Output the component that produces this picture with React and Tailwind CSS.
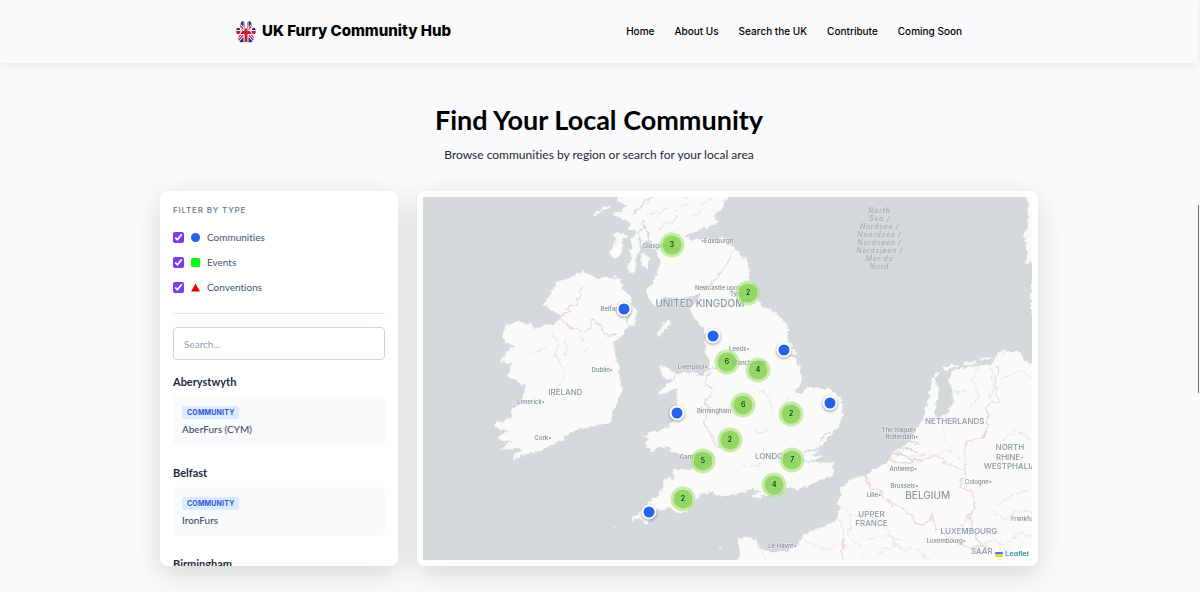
import React, { useState } from "react";

const navLinks = ["Home", "About Us", "Search the UK", "Contribute", "Coming Soon"];

const regions = [
  { name: "Aberystwyth", items: ["AberFurs (CYM)"] },
  { name: "Belfast", items: ["IronFurs"] },
  { name: "Birmingham", items: ["BrumFurs"] },
];

// map units: the visible window is MAP wide and high from its x / y origin
const MAP = { x: 424, y: 197, w: 607, h: 363 };

const clusters = [
  { x: 672, y: 245, count: 3 },
  { x: 748, y: 293, count: 2 },
  { x: 727, y: 362, count: 6 },
  { x: 758, y: 370, count: 4 },
  { x: 743, y: 405, count: 6 },
  { x: 791, y: 414, count: 2 },
  { x: 730, y: 440, count: 2 },
  { x: 703, y: 461, count: 5 },
  { x: 792, y: 460, count: 7 },
  { x: 774, y: 485, count: 4 },
  { x: 683, y: 499, count: 2 },
];

const pins = [
  { x: 624, y: 309 },
  { x: 713, y: 336 },
  { x: 784, y: 350 },
  { x: 830, y: 403 },
  { x: 677, y: 413 },
  { x: 649, y: 512 },
];

const cities = [
  { x: 643, y: 248, text: "Glasgow" },
  { x: 701, y: 243, text: "•Edinburgh" },
  { x: 695, y: 290, text: "Newcastle upon" },
  { x: 730, y: 296, text: "Tyne" },
  { x: 601, y: 311, text: "Belfast" },
  { x: 592, y: 372, text: "Dublin•" },
  { x: 729, y: 351, text: "Leeds•" },
  { x: 678, y: 369, text: "Liverpool•" },
  { x: 732, y: 365, text: "Manchester" },
  { x: 697, y: 413, text: "Birmingham" },
  { x: 518, y: 404, text: "Limerick•" },
  { x: 535, y: 440, text: "Cork•" },
  { x: 680, y: 459, text: "Cardiff" },
  { x: 881, y: 432, text: "The Hague•" },
  { x: 885, y: 439, text: "Rotterdam•" },
  { x: 889, y: 471, text: "Antwerp•" },
  { x: 890, y: 488, text: "Brussels•" },
  { x: 866, y: 497, text: "Lille•" },
  { x: 964, y: 484, text: "Cologne•" },
  { x: 1010, y: 521, text: "Frankfurt" },
  { x: 926, y: 543, text: "Luxembourg•" },
  { x: 768, y: 548, text: "Le Havre•" },
];

const countries = [
  { x: 700, y: 307, text: "UNITED KINGDOM", size: 10 },
  { x: 566, y: 395, text: "IRELAND", size: 8 },
  { x: 772, y: 459, text: "LONDON", size: 8 },
  { x: 954, y: 424, text: "NETHERLANDS", size: 8 },
  { x: 927, y: 499, text: "BELGIUM", size: 10 },
  { x: 968, y: 534, text: "LUXEMBOURG", size: 8 },
  { x: 871, y: 517, text: "UPPER", size: 8 },
  { x: 871, y: 526, text: "FRANCE", size: 8 },
  { x: 1009, y: 450, text: "NORTH", size: 8 },
  { x: 1009, y: 460, text: "RHINE-", size: 8 },
  { x: 1009, y: 469, text: "WESTPHALIA", size: 8 },
  { x: 992, y: 554, text: "SAARLAND", size: 8 },
];

const seaLines = ["North", "Sea /", "Nordsee /", "Noordzee /", "Nordsøen /", "Nordsjøen /", "Mer du", "Nord"];

const Logo = () => (
  <svg viewBox="0 0 40 44" className="h-[22px] w-5" aria-hidden="true">
    <clipPath id="paw">
      <ellipse cx="4.500" cy="20" rx="4" ry="6.500" />
      <ellipse cx="13.500" cy="9" rx="4.500" ry="8.500" />
      <ellipse cx="26.500" cy="9" rx="4.500" ry="8.500" />
      <ellipse cx="35.500" cy="20" rx="4" ry="6.500" />
      <path d="M20 15c7 0 9 9 13 14 5 7 1 14-5 14-3 0-5-1-8-1s-5 1-8 1c-6 0-10-7-5-14 4-5 6-14 13-14z" />
    </clipPath>
    <g clipPath="url(#paw)">
      <path fill="#1d2f7b" d="M0 0h40v44H0z" />
      <path stroke="#fff" strokeWidth="6" d="M0 0l40 44M40 0L0 44" />
      <path stroke="#cf1832" strokeWidth="2.500" d="M0 0l40 44M40 0L0 44" />
      <path stroke="#fff" strokeWidth="10" d="M20 0v44M0 23h40" />
      <path stroke="#cf1832" strokeWidth="6" d="M20 0v44M0 23h40" />
    </g>
  </svg>
);

const BaseMap = () => (
  <svg
    viewBox={`${MAP.x} ${MAP.y} ${MAP.w} ${MAP.h}`}
    preserveAspectRatio="none"
    className="block h-full w-full font-['Inter',sans-serif]"
    role="img"
    aria-label="Map of the British Isles"
  >
    <filter id="coast" filterUnits="userSpaceOnUse" x="420" y="190" width="620" height="375">
      <feTurbulence type="fractalNoise" baseFrequency="0.16" numOctaves="3" seed="4" />
      <feDisplacementMap in="SourceGraphic" scale="7" xChannelSelector="R" yChannelSelector="G" />
    </filter>
    <rect x="424" y="197" width="607" height="363" fill="#d4dadc" />
    <g filter="url(#coast)">
      <g fill="#fafaf8">
        {/* Great Britain */}
        <path d="M626 190L617 200L628 205L623 211L614 213L620 218L632 223L627 230L637 230L631 243L632 257L628 270L630 274L635 273L636 258L640 248L647 240L655 248L661 260L658 273L652 283L647 288L647 295L655 307L663 298L673 297L680 301L693 295L702 292L695 302L690 311L698 323L706 335L705 347L707 357L710 368L702 376L690 372L678 374L670 383L658 393L662 395L677 389L678 402L680 417L673 423L660 430L643 435L648 440L645 445L652 450L665 447L677 452L687 456L700 459L716 452L707 467L690 470L673 469L674 477L665 480L662 492L650 502L643 512L632 516L633 521L640 517L646 524L652 517L657 510L670 508L680 513L688 513L690 503L700 495L713 492L723 497L732 495L743 493L753 488L762 495L773 495L787 488L802 489L815 482L832 475L834 462L810 461L822 457L812 455L818 450L828 438L840 422L843 408L840 397L827 388L807 388L802 394L795 392L803 381L800 365L793 357L782 353L798 355L789 342L786 333L790 331L783 320L777 313L762 307L757 297L750 280L748 263L743 257L732 246L728 238L717 239L697 240L685 236L697 230L717 223L718 220L712 215L722 210L725 200L732 190Z" />
        {/* Ireland */}
        <path d="M583 271L595 277L610 277L620 278L623 287L629 295L632 302L638 313L635 323L627 327L622 336L613 342L615 357L620 367L620 380L622 387L617 403L612 417L612 423L597 425L577 430L557 443L543 450L512 459L523 448L500 450L513 442L497 439L508 431L495 427L498 422L513 418L511 412L522 403L526 387L514 380L506 375L513 363L502 362L507 353L514 347L506 343L503 337L505 325L513 323L532 323L533 328L548 325L557 323L561 315L543 305L552 293L557 282L572 277Z" />
        {/* Continent */}
        <path d="M738 570V537L757 538L758 547L767 551L787 552L798 545L803 535L830 523L838 517L839 500L840 487L850 479L865 475L890 460L892 452L907 443L917 430L925 410L930 387L932 378L937 384L938 398L934 412L938 418L945 414L954 401L951 389L947 381L952 372L970 365L990 367L993 357L1007 352L1020 352L1027 365L1040 360V570Z" />
        <path d="M1026 190L1028 215L1024 235L1027 258L1023 263L1033 262L1040 300V190Z" />
        <path d="M1030 275l3 25v25l-3-15z" />
        {/* smaller islands */}
        <path d="M657 334l3-7 6-6 4-1-1 6-5 7-6 4z" />
        <path d="M660 367l9 1 8 5-4 5-7 1-4-5z" />
        <path d="M609 251l5-3 3-10 7-6 3 4-6 8 1 8-5 7-5-2z" />
        <path d="M641 254l5-2 3 8-2 7-5-1z" />
        <path d="M594 214l8-5 7-5 2 2-7 5-8 6z" />
        <path d="M613 235l5-3 3 2-5 5z" />
        <path d="M751 495l7-2 5 3-6 3z" />
        <path d="M931 377l7-6 2 2-7 7zM942 368l8-3 8-1v2l-14 4zM963 363l13-2v2l-12 2zM981 359l10-2v2l-9 2zM995 354l10-4v2l-9 4z" />
        <path d="M718 548l4-2-1 4zM613 526l2-1v2z" />
      </g>
      {/* sea inlets */}
      <g fill="none" stroke="#d4dadc" strokeWidth="1.6">
        <path d="M640 248l-1-14 6-13M650 244l-3-13-4-7M632 216l10-11 8-7M893 452l14 5 8 4M896 446l12 3 10 4M907 441l12 2" />
        <path d="M710 368l9-1M818 449l-14 3M820 439l8-7M834 462l-32-1M627 325l3-13-4-8" />
      </g>
      {/* rivers and relief */}
      <g fill="none" stroke="#e3e7e7" strokeWidth="1">
        <path d="M645 205l10-8M655 217l14-10M648 214l12-3M667 224l12-7M676 210l14-6M690 216l12-5M700 206l12-7M668 232l10-4M684 198l9-5M659 231l8-9" />
        <path d="M552 332l6 12-2 12 10 14-3 12-7 6M580 332l3 8M588 345l-2 10M533 355l12-8M566 338l1 20" />
        <path d="M757 545l10 15M803 540l24 10 13-5M839 505l12 11 20-1 14 9 10 22 22 3 14 14M851 516l-3 20 12 12 2 14M867 540l17-6 17 7M947 450l-12 5-25 1M940 419l5 22M977 366l-6 15 8 14-10 12M950 394l15-4M990 368l3 17-4 13M1003 380l15-10 12 6M1000 442l15-12 15 9M996 505l16-10 18-5M992 510l14 9 12-10 14 4M975 550l13-10 15 5 14-11 15 2M960 460l-12-10M880 552l16-8 12 9" />
        <path d="M760 390l10 8 2 14M715 407l9 2 8-4M788 396l-5 12M742 465l14 1 12-8 22 2M750 425l8 8 12-2" />
      </g>
      {/* borders */}
      <g fill="none" stroke="#ead6d9" strokeWidth="1.3">
        <path d="M583 286L580 297L575 305L566 308L571 311L560 317L569 326L580 332L588 331L593 319L600 325L604 335L618 336" />
        <path d="M702 291L713 281L722 271L729 259L734 248" />
        <path d="M709 372L704 384L714 390L710 396L705 400L708 410L704 424L714 440L719 448" />
        <path d="M865 475L870 488L881 493L889 503L901 508L914 519L915 525L926 523L931 516L933 525L940 532L953 540L966 548L981 546L1000 552L1006 547" />
        <path d="M890 461L903 464L921 460L935 456L943 462L957 468L965 474L958 488L972 493L974 505L968 516L972 532L981 546" />
        <path d="M997 366L995 385L997 402L986 406L987 427L981 439L966 441L964 460L965 474" />
        <path d="M968 516L961 526L966 535M838 520l6 14-3 26" />
      </g>
    </g>

    <g className="fill-[#7f8c99] text-[6px] font-medium" stroke="#fafaf8" strokeWidth="1" strokeOpacity="0.6" paintOrder="stroke">
      {cities.map((c) => (
        <text key={c.text} x={c.x} y={c.y}>{c.text}</text>
      ))}
    </g>
    <g className="fill-[#8c9aa6] font-medium" textAnchor="middle" stroke="#fafaf8" strokeWidth="1" strokeOpacity="0.6" paintOrder="stroke">
      {countries.map((c) => (
        <text key={c.text} x={c.x} y={c.y} fontSize={c.size}>{c.text}</text>
      ))}
    </g>
    <g className="fill-[#a5afb6] text-[7px] font-medium italic tracking-widest" textAnchor="middle">
      {seaLines.map((line, i) => (
        <text key={line} x="879" y={213 + i * 8}>{line}</text>
      ))}
    </g>
  </svg>
);

const place = (p) => ({
  left: `${((p.x - MAP.x) / MAP.w) * 100}%`,
  top: `${((p.y - MAP.y) / MAP.h) * 100}%`,
});

const Header = () => (
  <header className="relative bg-slate-50 shadow-[0_2px_10px_rgba(0,0,0,0.08)]">
    <div className="mx-auto flex h-[63px] max-w-[726px] items-center justify-between font-['Inter',sans-serif] text-black">
      <a href="#home" className="flex items-center gap-1.5 text-[15px] font-extrabold">
        <Logo />
        UK Furry Community Hub
      </a>
      <nav className="flex gap-5 text-[10px] font-medium">
        {navLinks.map((link) => (
          <a key={link} href="#" className="hover:text-violet-600">{link}</a>
        ))}
      </nav>
    </div>
  </header>
);

const FilterRow = ({ label, checked, onChange, children }) => (
  <label className="flex h-[25px] items-center gap-[7px] text-[10px] text-slate-600">
    <input type="checkbox" checked={checked} onChange={onChange} className="m-0 size-[11px] accent-[#7c3aed]" />
    <svg viewBox="0 0 9 9" className="size-[9px]" aria-hidden="true">{children}</svg>
    {label}
  </label>
);

const Sidebar = () => {
  const [shown, setShown] = useState({ communities: true, events: true, conventions: true });
  const [query, setQuery] = useState("");
  const toggle = (key) => setShown({ ...shown, [key]: !shown[key] });
  const list = regions.filter((r) => r.name.toLowerCase().includes(query.toLowerCase()));

  return (
    <aside className="h-[375px] overflow-y-auto rounded-lg bg-white px-[13px] pt-[11px] shadow-[0_8px_28px_rgba(0,0,0,0.14)] [scrollbar-width:none]">
      <h2 className="mb-[7px] font-['Inter',sans-serif] text-[8px] leading-4 font-medium tracking-widest text-slate-500 uppercase">
        Filter by type
      </h2>
      <div className="mb-[13px] border-b border-slate-200 pb-[13px]">
        <FilterRow label="Communities" checked={shown.communities} onChange={() => toggle("communities")}>
          <circle cx="4.5" cy="4.5" r="4.5" fill="#2563eb" />
        </FilterRow>
        <FilterRow label="Events" checked={shown.events} onChange={() => toggle("events")}>
          <rect width="9" height="9" rx="1.5" fill="#0f1" />
        </FilterRow>
        <FilterRow label="Conventions" checked={shown.conventions} onChange={() => toggle("conventions")}>
          <path d="M4.5 0.500L9 8.500H0z" fill="#e80000" />
        </FilterRow>
      </div>
      <input
        type="text"
        aria-label="Search communities"
        placeholder="Search..."
        value={query}
        onChange={(e) => setQuery(e.target.value)}
        className="mb-3 block h-[33px] w-full rounded border border-slate-300 px-2.5 text-[10px] placeholder:text-slate-400"
      />
      {shown.communities &&
        list.map((region) => (
          <section key={region.name} className="mb-[18px]">
            <h3 className="mb-1 text-[11px] leading-5 font-bold text-slate-800">{region.name}</h3>
            {region.items.map((item) => (
              <div key={item} className="rounded bg-slate-50 px-[9px] pt-2.5 pb-2">
                <span className="block w-fit rounded-xs bg-blue-100 px-[5px] font-['Inter',sans-serif] text-[7px] leading-[13px] font-bold tracking-wide text-[#2f55d4] uppercase">
                  Community
                </span>
                <p className="mt-0.5 text-[10px] leading-4 text-slate-700">{item}</p>
              </div>
            ))}
          </section>
        ))}
    </aside>
  );
};

const CommunityMap = () => (
  <div className="h-[375px] rounded-lg bg-white p-1.5 shadow-[0_8px_28px_rgba(0,0,0,0.14)]">
    <div className="relative h-full overflow-hidden">
      <BaseMap />
      {clusters.map((c) => (
        <button
          key={`${c.x}-${c.y}`}
          style={place(c)}
          className="absolute flex size-[25px] -translate-x-1/2 -translate-y-1/2 items-center justify-center rounded-full bg-[#b5e28c]/70"
        >
          <span className="flex size-[19px] items-center justify-center rounded-full bg-[#6ecc39]/60 font-['Inter',sans-serif] text-[7px] text-black">
            {c.count}
          </span>
        </button>
      ))}
      {pins.map((p) => (
        <button
          key={`${p.x}-${p.y}`}
          aria-label="Community"
          style={place(p)}
          className="absolute size-[15px] -translate-x-1/2 -translate-y-1/2 rounded-full border-2 border-white bg-[#2563eb] shadow-[0_1px_3px_rgba(0,0,0,0.4)]"
        />
      ))}
      <a
        href="#leaflet"
        className="absolute right-0 bottom-0 flex items-center gap-0.5 bg-white/80 px-[3px] font-['Liberation_Sans',sans-serif] text-[8px] leading-3 text-[#0078a8]"
      >
        <svg viewBox="0 0 12 8" className="h-[5px] w-2" aria-hidden="true">
          <path fill="#4c7be1" d="M0 0h12v4H0z" />
          <path fill="#ffd500" d="M0 4h12v3H0z" />
          <path fill="#e0bc00" d="M0 7h12v1H0z" />
        </svg>
        Leaflet
      </a>
    </div>
  </div>
);

export default function App() {
  return (
    <div className="min-h-screen bg-slate-50 pr-0.5 font-['Lato',sans-serif] [font-variant-ligatures:none]">
      <Header />
      <main className="mx-auto max-w-[878px] pt-[39px] pb-6">
        <h1 className="text-center text-[27px] leading-9 font-bold text-black">
          Find Your Local Community
        </h1>
        <p className="mt-[9px] mb-7 text-center text-[12px] leading-4 text-gray-800">
          Browse communities by region or search for your local area
        </p>
        <div className="grid grid-cols-[238px_1fr] gap-[19px]">
          <Sidebar />
          <CommunityMap />
        </div>
      </main>
      <div className="fixed top-[205px] right-px h-[188px] w-px bg-neutral-500" />
    </div>
  );
}
